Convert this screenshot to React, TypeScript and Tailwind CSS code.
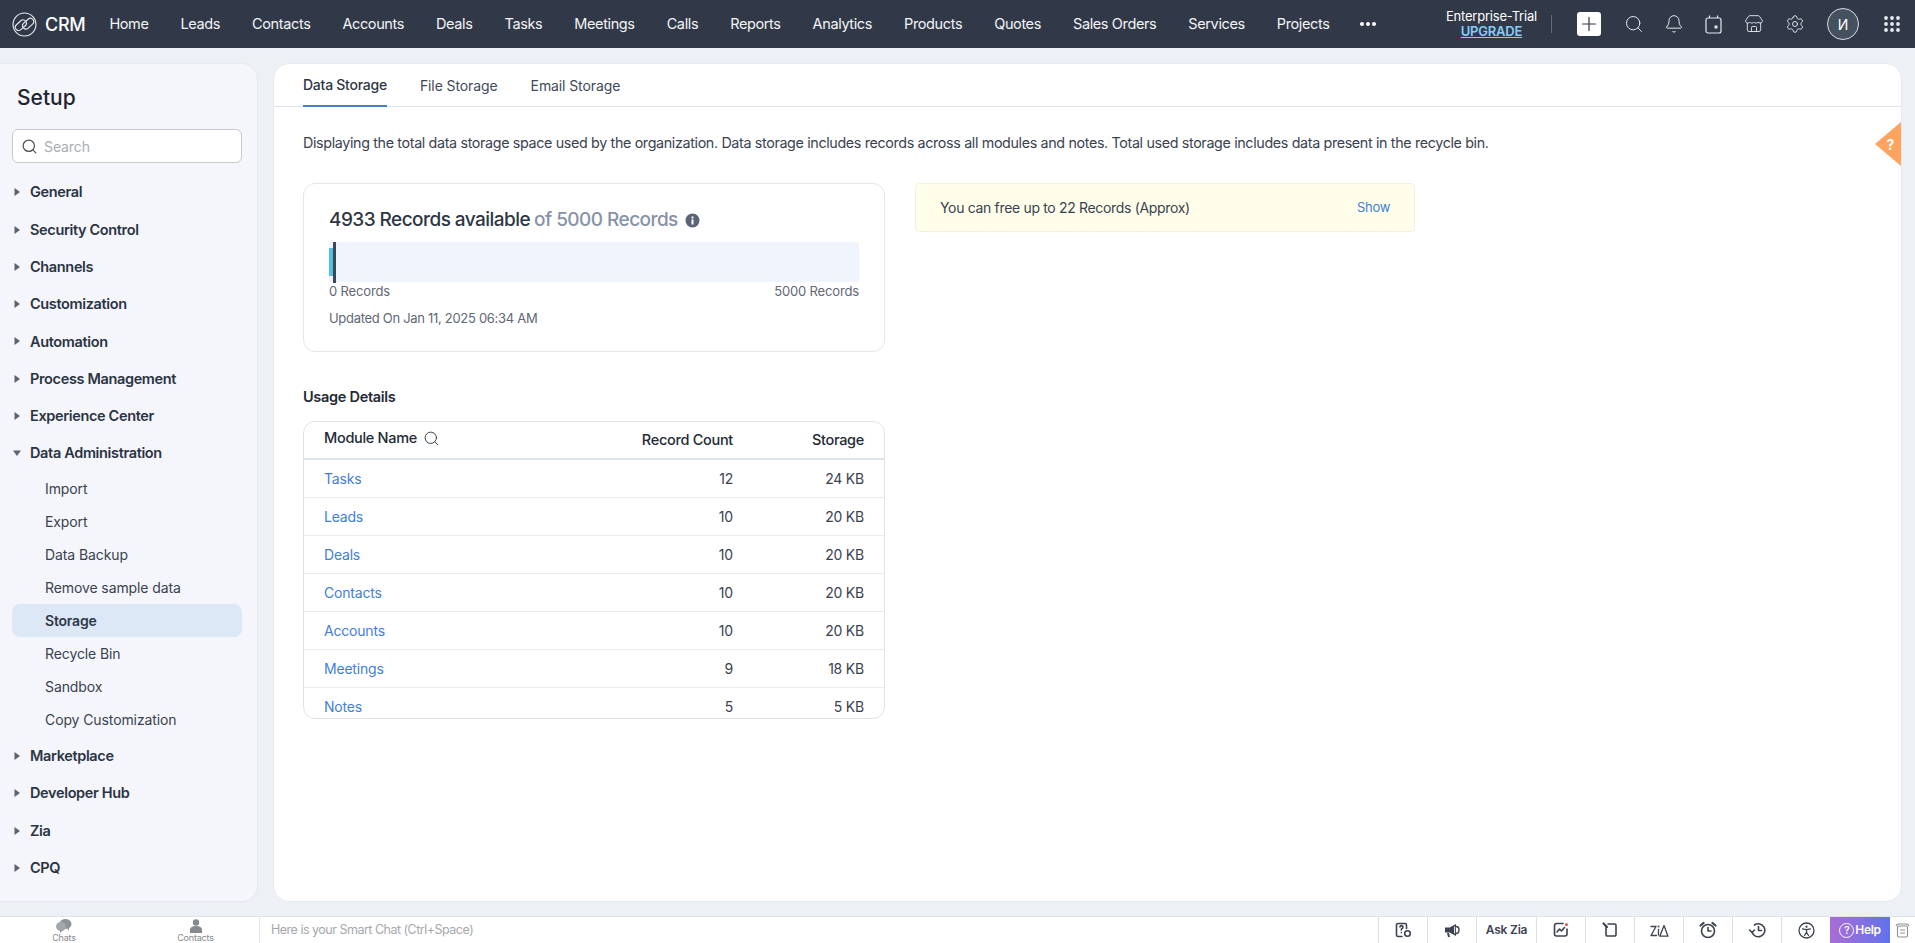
import { Bell, Search, Settings, Store, Plus } from 'lucide-react';

const navItems = ['Home', 'Leads', 'Contacts', 'Accounts', 'Deals', 'Tasks', 'Meetings', 'Calls', 'Reports', 'Analytics', 'Products', 'Quotes', 'Sales Orders', 'Services', 'Projects'];
const beforeItems = ['General', 'Security Control', 'Channels', 'Customization', 'Automation', 'Process Management', 'Experience Center'];
const subItems = ['Import', 'Export', 'Data Backup', 'Remove sample data', 'Storage', 'Recycle Bin', 'Sandbox', 'Copy Customization'];
const afterItems = ['Marketplace', 'Developer Hub', 'Zia', 'CPQ'];
const rows = [
  ['Tasks', '12', '24 KB'],
  ['Leads', '10', '20 KB'],
  ['Deals', '10', '20 KB'],
  ['Contacts', '10', '20 KB'],
  ['Accounts', '10', '20 KB'],
  ['Meetings', '9', '18 KB'],
  ['Notes', '5', '5 KB'],
];

function Caret({ open }: { open?: boolean }) {
  return (
    <svg width="8" height="8" viewBox="0 0 8 8" className="mr-[9px] ml-[13px] shrink-0 text-[#5d6470]" fill="currentColor">
      {open ? <path d="M0 1.5h8L4 7z" /> : <path d="M1.5 0v8L7 4z" />}
    </svg>
  );
}

function SideHead({ label, open }: { label: string; open?: boolean }) {
  return (
    <div className="flex h-[37.3px] items-center text-[14.5px] font-semibold tracking-[-0.35px] text-[#2b3443]">
      <Caret open={open} />
      {label}
    </div>
  );
}

function Sidebar() {
  return (
    <aside className="flex w-[258px] shrink-0 flex-col rounded-r-2xl border border-l-0 border-[#e6e9ef] bg-[#f4f6fb]">
      <h2 className="mt-[20px] ml-[17px] text-[21px] leading-7 font-medium text-[#1f2530]">Setup</h2>
      <div className="mt-[17px] ml-3 flex h-[34px] w-[230px] items-center rounded-md border border-[#c6c9ce] bg-white pl-[8px]">
        <Search size={17} strokeWidth={1.7} className="text-[#4a4f57]" />
        <span className="ml-[6px] text-[14px] tracking-[-0.1px] text-[#a9adb3]">Search</span>
      </div>
      <div className="mt-[10.6px] flex flex-col">
        {beforeItems.map((item) => (
          <SideHead key={item} label={item} />
        ))}
        <SideHead label="Data Administration" open />
        <div className="mb-[1.4px] flex flex-col">
          {subItems.map((item) => (
            <div
              key={item}
              className={
                item === 'Storage'
                  ? 'mx-3 flex h-[33px] w-[230px] items-center rounded-lg bg-[#dce8f6] pl-[33px] text-[14px] font-semibold tracking-[-0.2px] text-[#2f3846]'
                  : 'mx-3 flex h-[33px] w-[230px] items-center pl-[33px] text-[14px] tracking-[-0.1px] text-[#3a4250]'
              }
            >
              {item}
            </div>
          ))}
        </div>
        {afterItems.map((item) => (
          <SideHead key={item} label={item} />
        ))}
      </div>
    </aside>
  );
}

function Header() {
  return (
    <header className="flex h-12 shrink-0 items-center bg-[#313949] text-white">
      <svg width="25" height="25" viewBox="0 0 24 24" fill="none" stroke="#e6e8ec" strokeWidth="1.1" className="ml-[12px] shrink-0">
        <circle cx="12" cy="12" r="11" />
        <rect x="2.5" y="9.5" width="12" height="6.4" rx="3.2" transform="rotate(-42 8.5 12.7)" />
        <rect x="9.5" y="8" width="12" height="6.4" rx="3.2" transform="rotate(-42 15.5 11.2)" />
      </svg>
      <span className="ml-[8px] text-[18px] font-medium tracking-[-0.3px]">CRM</span>
      <nav className="ml-[24px] flex items-center gap-8 text-[14.5px] tracking-[-0.38px] text-[#f3f4f6]">
        {navItems.map((item) => (
          <span key={item} className="whitespace-nowrap">{item}</span>
        ))}
        <svg width="18" height="6" viewBox="0 0 18 6" fill="#fff" className="-ml-[2px]">
          <circle cx="3" cy="3" r="2" />
          <circle cx="9" cy="3" r="2" />
          <circle cx="15" cy="3" r="2" />
        </svg>
      </nav>
      <div className="ml-auto flex flex-col items-center pr-[14px] leading-none">
        <span className="text-[13px] tracking-[-0.2px]">Enterprise-Trial</span>
        <span className="mt-[2px] text-[13px] font-semibold tracking-[-0.2px] text-[#85cdf7] underline">UPGRADE</span>
      </div>
      <div className="h-[18px] w-px bg-[#626a78]" />
      <div className="ml-[25px] flex h-6 w-6 items-center justify-center rounded-[3px] bg-white">
        <Plus size={22} strokeWidth={1.3} className="text-[#2f3747]" />
      </div>
      <Search size={20} strokeWidth={1.2} className="ml-[23px] text-[#e6e8ec]" />
      <Bell size={20} strokeWidth={1.2} className="ml-[20px] text-[#e6e8ec]" />
      <svg width="17" height="19" viewBox="0 0 17 19" fill="none" stroke="#e6e8ec" strokeWidth="1.2" className="ml-[20.5px]">
        <rect x="1" y="3" width="15" height="15" rx="2" />
        <path d="M4.5 0.5v2.5M12.5 0.5v2.5" />
        <rect x="9.5" y="10.5" width="3" height="3" fill="#e6e8ec" stroke="none" />
      </svg>
      <Store size={20} strokeWidth={1.1} className="ml-[22.5px] text-[#e6e8ec]" />
      <Settings size={20} strokeWidth={1.1} className="ml-[21px] text-[#e6e8ec]" />
      <div className="ml-[22px] flex h-8 w-8 items-center justify-center rounded-full border border-[#d8dce2] bg-[#46515f] text-[14px] text-white">
        И
      </div>
      <svg width="16" height="16" viewBox="0 0 16 16" fill="#e6e8ec" className="mr-[15px] ml-[25px]">
        {[2, 8, 14].map((y) =>
          [2, 8, 14].map((x) => <circle key={`${x}-${y}`} cx={x} cy={y} r="1.9" />),
        )}
      </svg>
    </header>
  );
}

function UsageCard() {
  return (
    <div className="flex h-[169px] w-[582px] flex-col rounded-xl border border-[#e3e6ea] px-[25px] pt-[24px]">
      <div className="flex items-center text-[19px] leading-6 font-medium tracking-[-0.55px] text-[#2e3644]">
        4933 Records available
        <span className="ml-[4px] text-[#8792a8]">of 5000 Records</span>
        <svg width="15" height="15" viewBox="0 0 15 15" className="ml-[7px]">
          <circle cx="7.5" cy="7.5" r="7" fill="#5a6474" />
          <rect x="6.5" y="6.5" width="2" height="5" fill="#fff" />
          <rect x="6.5" y="3.5" width="2" height="2" fill="#fff" />
        </svg>
      </div>
      <div className="mt-[10px] flex h-10 w-full items-center bg-[#eff4fd]">
        <div className="h-[28px] w-1 bg-[#4fc3e2]" />
        <div className="-my-px h-[41px] w-[3px] bg-[#3c4654]" />
      </div>
      <div className="flex justify-between text-[13px] leading-[18px] tracking-[-0.15px] text-[#5f6875]">
        <span>0 Records</span>
        <span>5000 Records</span>
      </div>
      <div className="mt-[9px] text-[13px] leading-[18px] tracking-[-0.3px] text-[#5f6875]">Updated On Jan 11, 2025 06:34 AM</div>
    </div>
  );
}

function UsageTable() {
  return (
    <div className="mt-[14px] h-[298px] w-[582px] overflow-hidden rounded-xl border border-[#dfe3e8]">
      <div className="flex h-[38px] items-center border-b-2 border-[#dde8ee] pr-5 pl-5 text-[14.5px] font-medium tracking-[-0.3px] text-[#232a35]">
        <span className="-mt-[5px]">Module Name</span>
        <Search size={17} strokeWidth={1.4} className="-mt-[3px] ml-[6px] text-[#3a404a]" />
        <span className="ml-auto w-[131px] text-right">Record Count</span>
        <span className="w-[131px] text-right">Storage</span>
      </div>
      {rows.map(([name, count, size]) => (
        <div key={name} className="flex h-[38px] shrink-0 items-center border-b border-[#e8ebef] pr-5 pl-5 text-[14px] tracking-[-0.2px] text-[#3a4250]">
          <span className="text-[#3f7fd9]">{name}</span>
          <span className="ml-auto w-[131px] text-right">{count}</span>
          <span className="w-[131px] text-right">{size}</span>
        </div>
      ))}
    </div>
  );
}

function Main() {
  return (
    <main className="relative flex flex-1 flex-col rounded-2xl border border-[#e6e9ef] bg-white">
      <div className="flex h-[43px] shrink-0 gap-[33px] border-b border-[#dfe3e8] pl-[29px] text-[14px] tracking-[-0.1px] text-[#414a58]">
        <span className="-mb-px flex items-center border-b-2 border-[#3d84c6] font-medium tracking-[-0.25px] text-[#2e3644]">Data Storage</span>
        <span className="flex items-center">File Storage</span>
        <span className="flex items-center">Email Storage</span>
      </div>
      <p className="mt-[26px] pl-[29px] text-[14.3px] leading-5 tracking-[-0.35px] text-[#3a4250]">
        Displaying the total data storage space used by the organization. Data storage includes records across all modules and notes. Total used storage includes data present in the recycle bin.
      </p>
      <div className="mt-[30px] flex items-start gap-[30px] pl-[29px]">
        <div className="flex flex-col">
          <UsageCard />
          <h3 className="mt-[35px] text-[14.5px] leading-5 font-semibold tracking-[-0.3px] text-[#232a35]">Usage Details</h3>
          <UsageTable />
        </div>
        <div className="flex h-[49px] w-[500px] items-center justify-between rounded border border-[#f3f1dc] bg-[#fefeea] pr-[24px] pl-6 text-[14px] tracking-[-0.33px] text-[#3a4250]">
          <span>You can free up to 22 Records (Approx)</span>
          <span className="text-[13px] text-[#3f7fd9]">Show</span>
        </div>
      </div>
      <div className="absolute top-[58px] right-0 flex h-[44px] w-[26px] items-center justify-center bg-[#ffa45e] pl-[5px] text-[14px] font-bold text-white [clip-path:polygon(100%_0,100%_100%,0_50%)]">
        ?
      </div>
    </main>
  );
}

function FooterCell({ children }: { children: React.ReactNode }) {
  return (
    <div className="flex h-full w-[49px] items-center justify-center border-l border-[#dcdfe4]">
      {children}
    </div>
  );
}

function Footer() {
  const stroke = { fill: 'none', stroke: '#3d4450', strokeWidth: 1.6, strokeLinecap: 'round' as const, strokeLinejoin: 'round' as const };
  return (
    <footer className="flex h-[27px] shrink-0 items-stretch border-t border-[#dfe2e7] bg-white">
      <div className="flex w-[128px] flex-col items-center justify-center leading-none">
        <svg width="16" height="14" viewBox="0 0 16 14" fill="#8f9296">
          <ellipse cx="9.5" cy="5" rx="6" ry="5" />
          <ellipse cx="5" cy="7.5" rx="5" ry="4.5" fill="#a4a7aa" />
          <path d="M4 11l0 3 3-3zM11 9l2 3 0-4z" />
        </svg>
        <span className="text-[9px] tracking-[-0.2px] text-[#85888d]">Chats</span>
      </div>
      <div className="flex w-[132px] flex-col items-center justify-center border-r border-[#e3e5e9] pl-[4px] leading-none">
        <svg width="12" height="14" viewBox="0 0 12 14" fill="#85888d">
          <circle cx="6" cy="3.5" r="3.2" />
          <path d="M0 14v-3c0-2.5 2-4 6-4s6 1.5 6 4v3z" />
        </svg>
        <span className="text-[9px] tracking-[-0.2px] text-[#85888d]">Contacts</span>
      </div>
      <div className="flex flex-1 items-center pl-[11px] text-[12.5px] tracking-[-0.5px] text-[#a5a8ad]">Here is your Smart Chat (Ctrl+Space)</div>
      <FooterCell>
        <svg width="17" height="16" viewBox="0 0 17 16" {...stroke}>
          <path d="M7 14.5H3A1.5 1.5 0 0 1 1.5 13V3A1.5 1.5 0 0 1 3 1.5h7A1.5 1.5 0 0 1 11.5 3v3.5" />
          <path d="M5 5a1.5 1.5 0 1 1 2 1.5c-.7.4-.7 1-.7 1.5M6.3 10.5v.1" />
          <circle cx="12.5" cy="11.5" r="2.8" />
        </svg>
      </FooterCell>
      <FooterCell>
        <svg width="17" height="15" viewBox="0 0 17 15" fill="#3d4450">
          <path d="M1 4.5h4.5L12 1v12L5.5 9.5H1z" />
          <path d="M12 3.5c4 0 4 7 0 7" fill="none" stroke="#3d4450" strokeWidth="1.4" />
          <path d="M3 10l1 4h2l-1-4z" />
          <path d="M10.6 3.5v7" stroke="#fff" strokeWidth="0.9" />
        </svg>
      </FooterCell>
      <div className="flex h-full w-[60px] items-center justify-center border-l border-[#dcdfe4] text-[12px] font-semibold tracking-[-0.2px] text-[#3d4450]">Ask Zia</div>
      <FooterCell>
        <svg width="16" height="16" viewBox="0 0 16 16" {...stroke}>
          <path d="M10 1.5H3.5a2 2 0 0 0-2 2V12a2 2 0 0 0 2 2H12a2 2 0 0 0 2-2V7" />
          <path d="M4 10l2.5-3 2 2 3-3.5" />
          <circle cx="13.5" cy="2.5" r="1.5" fill="#e8524a" stroke="none" />
        </svg>
      </FooterCell>
      <FooterCell>
        <svg width="16" height="16" viewBox="0 0 16 16" {...stroke}>
          <path d="M6 2h6.5A1.5 1.5 0 0 1 14 3.5v9a1.5 1.5 0 0 1-1.5 1.5h-7A1.5 1.5 0 0 1 4 12.5V5" />
          <path d="M1.5 1.5L5 5" strokeWidth="2.2" />
        </svg>
      </FooterCell>
      <FooterCell>
        <svg width="19" height="15" viewBox="0 0 19 15" {...stroke} strokeWidth="1.3">
          <path d="M1 3.5h5L1 12.5h5.5" />
          <path d="M8.5 12V6.5" />
          <circle cx="8.5" cy="3.5" r="0.4" />
          <path d="M9.800 13.200L14 2.5l4 10.700z" />
        </svg>
      </FooterCell>
      <FooterCell>
        <svg width="18" height="18" viewBox="0 0 18 18" {...stroke}>
          <circle cx="9" cy="10" r="6.5" />
          <path d="M9 6.5V10h3" />
          <path d="M1.500 4.500L4.500 2M16.500 4.500L13.500 2" strokeWidth="2.2" />
        </svg>
      </FooterCell>
      <FooterCell>
        <svg width="18" height="16" viewBox="0 0 18 16" {...stroke}>
          <path d="M4 10a6.5 6.5 0 1 0 2.5-7" />
          <path d="M10.5 4.5V8.5h3" />
          <path d="M1.500 8L4 10.5 6.500 8" />
        </svg>
      </FooterCell>
      <FooterCell>
        <svg width="17" height="17" viewBox="0 0 17 17" {...stroke} strokeWidth="1.3">
          <circle cx="8.5" cy="8.5" r="7.5" />
          <circle cx="8.5" cy="4.7" r="1.1" fill="#3d4450" stroke="none" />
          <path d="M4.5 6.800l4 .8 4-.8M8.500 7.600v2.700M8.500 10.300l-2 3.200M8.500 10.300l2 3.200" />
        </svg>
      </FooterCell>
      <div className="flex h-full w-[60px] items-center justify-center gap-[1px] bg-gradient-to-r from-[#a96bd6] to-[#5d73ea] text-[12px] font-semibold tracking-[-0.3px] text-white">
        <span className="flex h-[15px] w-[15px] items-center justify-center rounded-full border border-white text-[10px] leading-none">?</span>
        Help
      </div>
      <div className="flex h-full w-[25px] items-center justify-center">
        <svg width="15" height="15" viewBox="0 0 15 15" fill="none" stroke="#8b8f95" strokeWidth="1.1">
          <rect x="2.5" y="3" width="10" height="11" rx="1.5" />
          <path d="M1 3c.5-1.5 1.5-2 3-2h7c1.5 0 2.5.5 3 2M5 7h5M5 10h5" />
        </svg>
      </div>
    </footer>
  );
}

export default function App() {
  return (
    <div className="flex h-screen flex-col overflow-hidden bg-[#edf0f5] font-['Inter','Liberation_Sans',sans-serif]">
      <Header />
      <div className="flex min-h-0 flex-1 gap-[15px] pt-[15px] pr-[13px] pb-[14px]">
        <Sidebar />
        <Main />
      </div>
      <Footer />
    </div>
  );
}
